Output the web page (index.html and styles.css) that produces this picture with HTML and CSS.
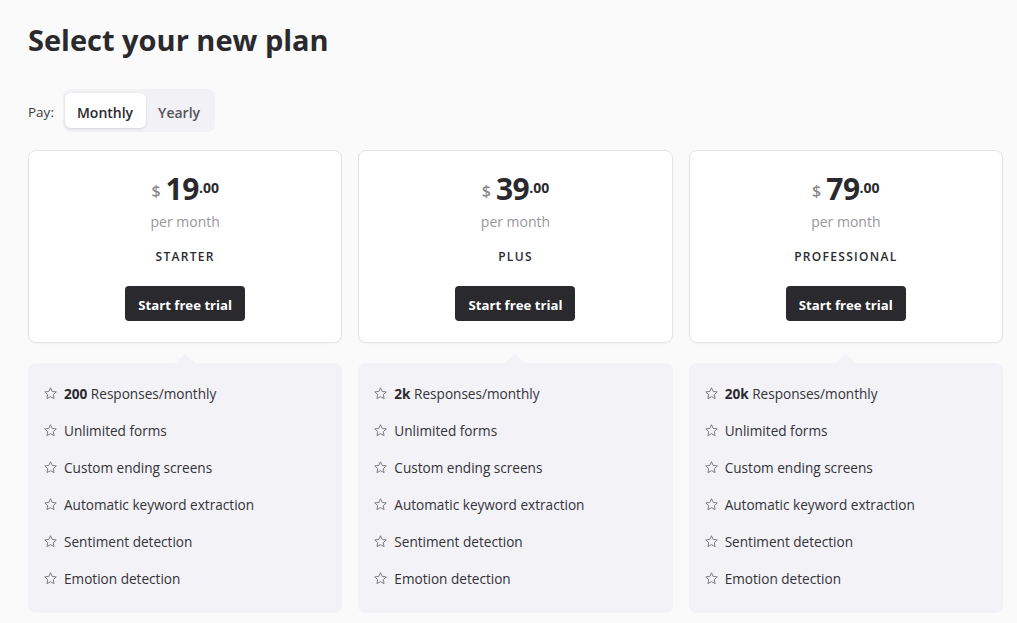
FILE: index.html
```html
<!DOCTYPE html>
<html>
<head>
<meta charset="utf-8">
<link rel="stylesheet" href="styles.css">
</head>
<body>
<div class="page">
  <h1 class="title">Select your new plan</h1>
  <div class="pay">
    <span class="pay-label">Pay:</span>
    <div class="toggle">
      <span class="opt active">Monthly</span>
      <span class="opt">Yearly</span>
    </div>
  </div>
  <div class="plans">
    <div class="plan">
      <div class="card">
        <div class="price"><span class="cur">$</span><span class="amt">19</span><span class="cents">.00</span></div>
        <div class="per">per month</div>
        <div class="name">STARTER</div>
        <button class="btn">Start free trial</button>
      </div>
      <ul class="features">
        <li><svg class="star" viewBox="0 0 24 24"><path d="M12 2.8l2.75 5.9 6.45.75-4.77 4.4 1.27 6.37L12 17.05l-5.7 3.17 1.27-6.37L2.8 9.45l6.45-.75z"/></svg><span><b>200</b> Responses/monthly</span></li>
        <li><svg class="star" viewBox="0 0 24 24"><path d="M12 2.8l2.75 5.9 6.45.75-4.77 4.4 1.27 6.37L12 17.05l-5.7 3.17 1.27-6.37L2.8 9.45l6.45-.75z"/></svg><span>Unlimited forms</span></li>
        <li><svg class="star" viewBox="0 0 24 24"><path d="M12 2.8l2.75 5.9 6.45.75-4.77 4.4 1.27 6.37L12 17.05l-5.7 3.17 1.27-6.37L2.8 9.45l6.45-.75z"/></svg><span>Custom ending screens</span></li>
        <li><svg class="star" viewBox="0 0 24 24"><path d="M12 2.8l2.75 5.9 6.45.75-4.77 4.4 1.27 6.37L12 17.05l-5.7 3.17 1.27-6.37L2.8 9.45l6.45-.75z"/></svg><span>Automatic keyword extraction</span></li>
        <li><svg class="star" viewBox="0 0 24 24"><path d="M12 2.8l2.75 5.9 6.45.75-4.77 4.4 1.27 6.37L12 17.05l-5.7 3.17 1.27-6.37L2.8 9.45l6.45-.75z"/></svg><span>Sentiment detection</span></li>
        <li><svg class="star" viewBox="0 0 24 24"><path d="M12 2.8l2.75 5.9 6.45.75-4.77 4.4 1.27 6.37L12 17.05l-5.7 3.17 1.27-6.37L2.8 9.45l6.45-.75z"/></svg><span>Emotion detection</span></li>
      </ul>
    </div>
    <div class="plan">
      <div class="card">
        <div class="price"><span class="cur">$</span><span class="amt">39</span><span class="cents">.00</span></div>
        <div class="per">per month</div>
        <div class="name">PLUS</div>
        <button class="btn">Start free trial</button>
      </div>
      <ul class="features">
        <li><svg class="star" viewBox="0 0 24 24"><path d="M12 2.8l2.75 5.9 6.45.75-4.77 4.4 1.27 6.37L12 17.05l-5.7 3.17 1.27-6.37L2.8 9.45l6.45-.75z"/></svg><span><b>2k</b> Responses/monthly</span></li>
        <li><svg class="star" viewBox="0 0 24 24"><path d="M12 2.8l2.75 5.9 6.45.75-4.77 4.4 1.27 6.37L12 17.05l-5.7 3.17 1.27-6.37L2.8 9.45l6.45-.75z"/></svg><span>Unlimited forms</span></li>
        <li><svg class="star" viewBox="0 0 24 24"><path d="M12 2.8l2.75 5.9 6.45.75-4.77 4.4 1.27 6.37L12 17.05l-5.7 3.17 1.27-6.37L2.8 9.45l6.45-.75z"/></svg><span>Custom ending screens</span></li>
        <li><svg class="star" viewBox="0 0 24 24"><path d="M12 2.8l2.75 5.9 6.45.75-4.77 4.4 1.27 6.37L12 17.05l-5.7 3.17 1.27-6.37L2.8 9.45l6.45-.75z"/></svg><span>Automatic keyword extraction</span></li>
        <li><svg class="star" viewBox="0 0 24 24"><path d="M12 2.8l2.75 5.9 6.45.75-4.77 4.4 1.27 6.37L12 17.05l-5.7 3.17 1.27-6.37L2.8 9.45l6.45-.75z"/></svg><span>Sentiment detection</span></li>
        <li><svg class="star" viewBox="0 0 24 24"><path d="M12 2.8l2.75 5.9 6.45.75-4.77 4.4 1.27 6.37L12 17.05l-5.7 3.17 1.27-6.37L2.8 9.45l6.45-.75z"/></svg><span>Emotion detection</span></li>
      </ul>
    </div>
    <div class="plan">
      <div class="card">
        <div class="price"><span class="cur">$</span><span class="amt">79</span><span class="cents">.00</span></div>
        <div class="per">per month</div>
        <div class="name">PROFESSIONAL</div>
        <button class="btn">Start free trial</button>
      </div>
      <ul class="features">
        <li><svg class="star" viewBox="0 0 24 24"><path d="M12 2.8l2.75 5.9 6.45.75-4.77 4.4 1.27 6.37L12 17.05l-5.7 3.17 1.27-6.37L2.8 9.45l6.45-.75z"/></svg><span><b>20k</b> Responses/monthly</span></li>
        <li><svg class="star" viewBox="0 0 24 24"><path d="M12 2.8l2.75 5.9 6.45.75-4.77 4.4 1.27 6.37L12 17.05l-5.7 3.17 1.27-6.37L2.8 9.45l6.45-.75z"/></svg><span>Unlimited forms</span></li>
        <li><svg class="star" viewBox="0 0 24 24"><path d="M12 2.8l2.75 5.9 6.45.75-4.77 4.4 1.27 6.37L12 17.05l-5.7 3.17 1.27-6.37L2.8 9.45l6.45-.75z"/></svg><span>Custom ending screens</span></li>
        <li><svg class="star" viewBox="0 0 24 24"><path d="M12 2.8l2.75 5.9 6.45.75-4.77 4.4 1.27 6.37L12 17.05l-5.7 3.17 1.27-6.37L2.8 9.45l6.45-.75z"/></svg><span>Automatic keyword extraction</span></li>
        <li><svg class="star" viewBox="0 0 24 24"><path d="M12 2.8l2.75 5.9 6.45.75-4.77 4.4 1.27 6.37L12 17.05l-5.7 3.17 1.27-6.37L2.8 9.45l6.45-.75z"/></svg><span>Sentiment detection</span></li>
        <li><svg class="star" viewBox="0 0 24 24"><path d="M12 2.8l2.75 5.9 6.45.75-4.77 4.4 1.27 6.37L12 17.05l-5.7 3.17 1.27-6.37L2.8 9.45l6.45-.75z"/></svg><span>Emotion detection</span></li>
      </ul>
    </div>
  </div>
</div>
</body>
</html>
```

FILE: styles.css
```css
* { box-sizing: border-box; }
html, body { margin: 0; padding: 0; }
body {
  background: #fafafa;
  font-family: "Open Sans", "Noto Sans CJK KR", sans-serif;
  color: #2a2a2e;
}
.page {
  padding: 20px 14px 0 28px;
  width: 1017px;
}
.title {
  margin: 0;
  font-size: 29px;
  font-weight: 700;
  line-height: 40px;
  color: #2a2a2e;
}
.pay {
  margin-top: 29px;
  display: flex;
  align-items: center;
  gap: 9px;
  height: 43px;
}
.pay-label {
  font-size: 13.5px;
  color: #3a3a3e;
  padding-top: 3px;
}
.toggle {
  display: flex;
  background: #f1f1f6;
  border-radius: 8px;
  padding: 4px 2px;
  height: 43px;
}
.opt {
  display: flex;
  align-items: center;
  padding: 3px 13px 0 12px;
  height: 35px;
  font-size: 14px;
  font-weight: 600;
  color: #55555a;
  border-radius: 6px;
}
.opt.active {
  background: #fff;
  color: #2a2a2e;
  box-shadow: 0 1px 3px rgba(0,0,0,0.12);
}
.plans {
  margin-top: 18px;
  display: grid;
  grid-template-columns: repeat(3, 1fr);
  gap: 16px;
}
.plan {
  display: flex;
  flex-direction: column;
}
.card {
  background: #fff;
  border: 1px solid #e4e4e8;
  border-radius: 8px;
  height: 193px;
  display: flex;
  flex-direction: column;
  align-items: center;
  padding-top: 23px;
  box-shadow: 0 1px 2px rgba(0,0,0,0.03);
}
.price {
  display: flex;
  align-items: flex-start;
  line-height: 1;
  height: 36px;
}
.cur {
  font-size: 16px;
  font-weight: 600;
  color: #8a8a8e;
  margin-top: 9px;
  margin-right: 5px;
}
.amt {
  font-size: 30px;
  font-weight: 700;
  color: #2a2a2e;
  letter-spacing: -0.5px;
}
.cents {
  font-size: 14px;
  font-weight: 700;
  color: #2a2a2e;
  margin-top: 7px;
}
.per {
  font-size: 14px;
  color: #98989c;
  line-height: 20px;
  margin-top: 2px;
}
.name {
  margin-top: 17px;
  font-size: 12px;
  font-weight: 600;
  letter-spacing: 1.3px;
  line-height: 16px;
  color: #2a2a2e;
}
.btn {
  margin-top: 21px;
  width: 120px;
  height: 35px;
  padding: 2px 0 0;
  background: #2a2a2e;
  color: #fff;
  border: none;
  border-radius: 4px;
  font-family: inherit;
  font-size: 13.2px;
  font-weight: 700;
}
.features {
  position: relative;
  list-style: none;
  margin: 20px 0 0 0;
  padding: 12px 16px 14px 15px;
  background: #f2f2f7;
  border-radius: 8px;
  height: 250px;
}
.features::before {
  content: "";
  position: absolute;
  top: -9px;
  left: 50%;
  margin-left: -10px;
  width: 0;
  height: 0;
  border-left: 10px solid transparent;
  border-right: 10px solid transparent;
  border-bottom: 9px solid #f2f2f7;
}
.features li {
  display: flex;
  align-items: center;
  gap: 6px;
  height: 37px;
  font-size: 13.6px;
  color: #333338;
}
.features b { font-weight: 700; color: #2a2a2e; }
.star {
  width: 15px;
  height: 15px;
  fill: none;
  stroke: #6e6e74;
  stroke-width: 1.4;
  stroke-linejoin: round;
  flex: none;
  margin-top: -1px;
}
```
